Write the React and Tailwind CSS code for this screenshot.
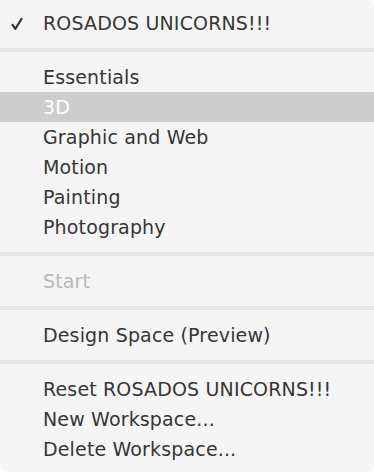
const groups = [
  [{ label: 'ROSADOS UNICORNS!!!', checked: true }],
  [
    { label: 'Essentials' },
    { label: '3D', active: true },
    { label: 'Graphic and Web' },
    { label: 'Motion' },
    { label: 'Painting' },
    { label: 'Photography' },
  ],
  [{ label: 'Start', disabled: true }],
  [{ label: 'Design Space (Preview)' }],
  [
    { label: 'Reset ROSADOS UNICORNS!!!' },
    { label: 'New Workspace...' },
    { label: 'Delete Workspace...' },
  ],
]

function Item({ item }) {
  const color = item.active
    ? 'bg-[#cdcdcd] text-white'
    : item.disabled
      ? 'text-[#b8b8b8]'
      : 'text-[#363636]'
  return (
    <div className={`relative flex h-[30px] items-center pl-[43px] ${color}`}>
      {item.checked && (
        <svg className="absolute left-[11px] top-[9px] h-[13px] w-[12px]" viewBox="0 0 12 13">
          <path d="M1.2 7.2 L4.3 12 L11 1" fill="none" stroke="#333" strokeWidth="2.2" strokeLinejoin="round" />
        </svg>
      )}
      <span>{item.label}</span>
    </div>
  )
}

export default function App() {
  return (
    <div className="h-[472px] w-[374px] bg-white">
      <div
        className="flex h-[472px] w-[374px] flex-col rounded-tr-[8px] rounded-b-[8px] bg-[#f5f5f5] py-[8px] text-[19px] leading-none tracking-[0.15px]"
        style={{ fontFamily: '"DejaVu Sans", sans-serif' }}
      >
        {groups.map((group, i) => (
          <div key={i}>
            {i > 0 && <div className="my-[10px] h-[4px] bg-[#e6e6e6]" />}
            {group.map(item => (
              <Item key={item.label} item={item} />
            ))}
          </div>
        ))}
      </div>
    </div>
  )
}
